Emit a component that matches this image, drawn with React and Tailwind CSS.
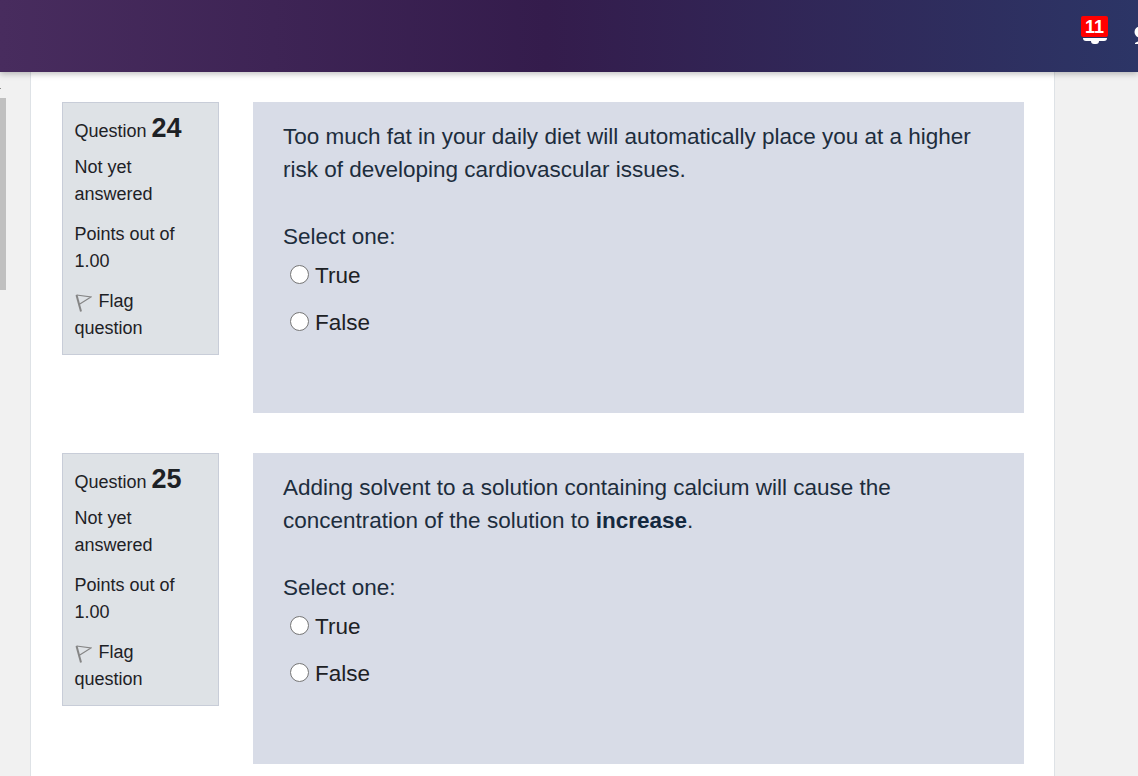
import React from "react";

function Flag() {
  return (
    <svg width="17" height="18" viewBox="0 0 17 18" fill="none" stroke="#858585" className="inline-block align-[-5px]">
      <path d="M1.5 1 L6 17.5" strokeWidth="2" />
      <path d="M1.5 1 L16 3 L4 10.5" strokeWidth="1.2" />
    </svg>
  );
}

function Radio({ label, className = "" }) {
  return (
    <div className={`flex h-[33px] items-center pl-[7px] ${className}`}>
      <span className="h-[19px] w-[19px] rounded-full border border-[#767676] bg-white" />
      <span className="relative top-[1px] ml-[6px] text-[22.5px] text-[#1d2125]">{label}</span>
    </div>
  );
}

function Question({ number, children, className = "" }) {
  return (
    <div className={`flex items-start gap-[34px] ${className}`}>
      <div className="h-[252.5px] w-[157px] shrink-0 border border-[#c8cdd8] bg-[#dee2e6] px-[11.5px] pt-[7px] text-[18px] leading-[27px] text-[#1d2125]">
        <div className="h-[37px] leading-[37px]">
          Question <span className="text-[27px] font-bold">{number}</span>
        </div>
        <div className="mt-[7px]">Not yet<br />answered</div>
        <div className="mt-[13px]">Points out of<br />1.00</div>
        <div className="mt-[13px]"><Flag /> <span className="ml-[2px]">Flag</span><br />question</div>
      </div>
      <div className="h-[311px] w-[771px] bg-[#d8dce7] px-[30px] pt-[18px] text-[22.5px] leading-[33px] text-[#1d2d3d]">
        <p>{children}</p>
        <p className="mt-[34px]">Select one:</p>
        <Radio label="True" className="mt-[5px]" />
        <Radio label="False" className="mt-[14px]" />
      </div>
    </div>
  );
}

export default function App() {
  return (
    <div className="h-[776px] overflow-hidden bg-[#f1f1f1] font-['Liberation_Sans',Arial,sans-serif]">
      <header className="relative z-10 flex h-[72px] justify-end bg-[linear-gradient(90deg,#482c5e_0%,#341c4c_48%,#2c3566_100%)] shadow-[0_2px_6px_rgba(0,0,0,0.25)]">
        <div className="relative mr-[31px] mt-[38px] h-[6px] w-[24px]">
          <div className="mx-auto h-[3px] w-[24px] rounded-b-[3px] bg-white" />
          <div className="mx-auto h-[3px] w-[8px] rounded-b-full bg-white" />
          <span className="absolute -top-[22px] left-[-2px] flex h-[21px] w-[27px] items-center justify-center rounded-[2px] bg-[#ff0000] text-[18px] font-semibold leading-none text-white">11</span>
        </div>
        <svg width="4" height="17" viewBox="0 0 4 17" className="absolute right-0 top-[27px]" fill="#ffffff">
          <circle cx="6" cy="5" r="5.5" />
          <path d="M1 16 Q3 14 8 14 L8 17 L1 17 Z" />
        </svg>
      </header>
      <div className="flex">
        <aside className="w-[30px] shrink-0 pt-[16px]">
          <div className="h-[1px] w-[1px] bg-[#8a8a8a]" />
          <div className="mt-[9px] h-[192px] w-[6px] bg-[#c0c0c0]" />
        </aside>
        <main className="h-[704px] w-[1025px] border-x border-[#dee2e6] bg-white pl-[31px] pt-[30px]">
          <Question number="24">
            Too much fat in your daily diet will automatically place you at a higher risk of developing cardiovascular issues.
          </Question>
          <Question number="25" className="mt-[40px]">
            Adding solvent to a solution containing calcium will cause the concentration of the solution to <b className="text-[#14293f]">increase</b>.
          </Question>
        </main>
      </div>
    </div>
  );
}
